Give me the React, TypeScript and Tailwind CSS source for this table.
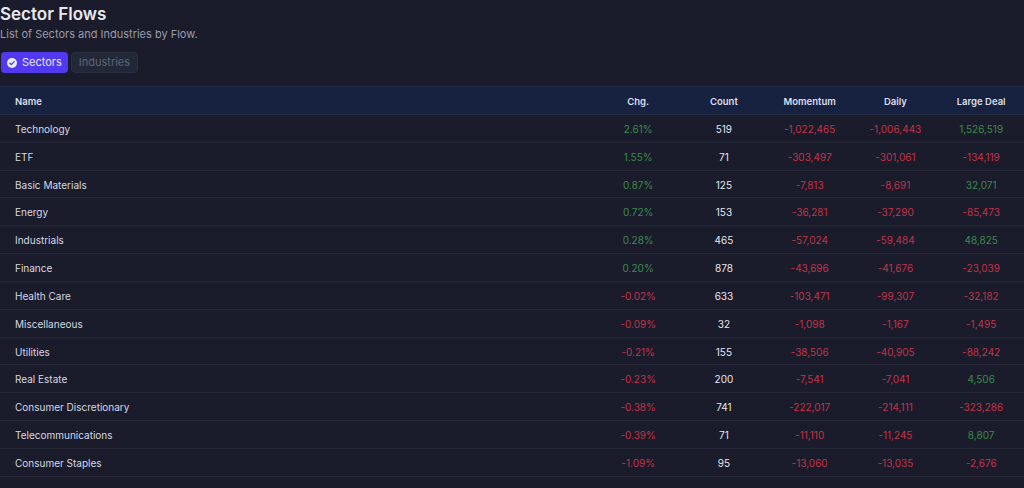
import React from "react";

type Row = { name: string; chg: string; count: string; mom: string; daily: string; ld: string };

const rows: Row[] = [
  { name: "Technology", chg: "2.61%", count: "519", mom: "-1,022,465", daily: "-1,006,443", ld: "1,526,519" },
  { name: "ETF", chg: "1.55%", count: "71", mom: "-303,497", daily: "-301,061", ld: "-134,119" },
  { name: "Basic Materials", chg: "0.87%", count: "125", mom: "-7,813", daily: "-8,691", ld: "32,071" },
  { name: "Energy", chg: "0.72%", count: "153", mom: "-36,281", daily: "-37,290", ld: "-85,473" },
  { name: "Industrials", chg: "0.28%", count: "465", mom: "-57,024", daily: "-59,484", ld: "48,825" },
  { name: "Finance", chg: "0.20%", count: "878", mom: "-43,696", daily: "-41,676", ld: "-23,039" },
  { name: "Health Care", chg: "-0.02%", count: "633", mom: "-103,471", daily: "-99,307", ld: "-32,182" },
  { name: "Miscellaneous", chg: "-0.09%", count: "32", mom: "-1,098", daily: "-1,167", ld: "-1,495" },
  { name: "Utilities", chg: "-0.21%", count: "155", mom: "-38,506", daily: "-40,905", ld: "-88,242" },
  { name: "Real Estate", chg: "-0.23%", count: "200", mom: "-7,541", daily: "-7,041", ld: "4,506" },
  { name: "Consumer Discretionary", chg: "-0.38%", count: "741", mom: "-222,017", daily: "-214,111", ld: "-323,286" },
  { name: "Telecommunications", chg: "-0.39%", count: "71", mom: "-11,110", daily: "-11,245", ld: "8,807" },
  { name: "Consumer Staples", chg: "-1.09%", count: "95", mom: "-13,060", daily: "-13,035", ld: "-2,676" },
];

const color = (v: string) => (v.startsWith("-") ? "text-[#c23548]" : "text-[#3c8c4d]");

export default function App() {
  return (
    <div
      className="w-[1024px] h-[488px] overflow-hidden bg-[#1a1b2b] text-white"
      style={{ fontFamily: "Inter, 'Noto Sans', sans-serif" }}
    >
      <div className="pt-[3px]">
        <h1 className="text-[17px] leading-[23px] font-semibold text-[#e8e9ef]">Sector Flows</h1>
        <p className="text-[11px] leading-[15px] text-[#9a9cab] mt-[1px]">List of Sectors and Industries by Flow.</p>
        <div className="flex gap-[3px] mt-[10px] ml-[1px]">
          <button className="flex items-center gap-[5px] h-[21px] px-[6px] rounded-[4px] bg-[#5139ef] text-[11px] text-[#e9e6ff]">
            <svg width="10" height="10" viewBox="0 0 12 12">
              <circle cx="6" cy="6" r="6" fill="#eeeaff" />
              <path d="M3.4 6.2 L5.2 7.9 L8.6 4.3" stroke="#5139ef" strokeWidth="1.6" fill="none" strokeLinecap="round" strokeLinejoin="round" />
            </svg>
            Sectors
          </button>
          <button className="h-[21px] px-[7px] rounded-[4px] bg-[#222838] border border-[#2a3040] text-[11px] text-[#5d6577]">
            Industries
          </button>
        </div>
      </div>
      <div className="mt-[13px]">
        <div className="flex items-center h-[29px] bg-[#172140] border-y border-[#232a45] text-[9.5px] font-semibold text-[#dcdfe9] pt-[3px]">
          <div className="w-[597px] pl-[15px]">Name</div>
          <div className="w-[86px] text-center">Chg.</div>
          <div className="w-[86px] text-center">Count</div>
          <div className="w-[86px] text-center">Momentum</div>
          <div className="w-[86px] text-center">Daily</div>
          <div className="w-[86px] text-center">Large Deal</div>
        </div>
        {rows.map((r) => (
          <div key={r.name} className="flex items-center h-[27.84px] border-b border-[#262838] text-[10px] pt-[2px]">
            <div className="w-[597px] pl-[15px] text-[#d7d9e2]">{r.name}</div>
            <div className={`w-[86px] text-center ${color(r.chg)}`}>{r.chg}</div>
            <div className="w-[86px] text-center text-[#e6e7ee]">{r.count}</div>
            <div className={`w-[86px] text-center ${color(r.mom)}`}>{r.mom}</div>
            <div className={`w-[86px] text-center ${color(r.daily)}`}>{r.daily}</div>
            <div className={`w-[86px] text-center ${color(r.ld)}`}>{r.ld}</div>
          </div>
        ))}
      </div>
    </div>
  );
}
